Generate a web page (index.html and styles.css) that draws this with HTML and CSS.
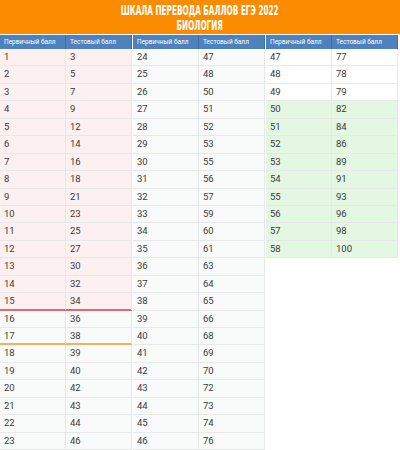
FILE: index.html
```html
<!DOCTYPE html>
<html lang="ru">
<head>
<meta charset="utf-8">
<link rel="stylesheet" href="styles.css">
</head>
<body>
<header class="banner">
  <div class="title"><span>ШКАЛА ПЕРЕВОДА БАЛЛОВ ЕГЭ 2022</span></div>
  <div class="title"><span>БИОЛОГИЯ</span></div>
</header>
<main class="tables">
  <section class="tbl">
    <div class="head"><div>Первичный балл</div><div>Тестовый балл</div></div>
    <div class="row pink"><div>1</div><div>3</div></div>
    <div class="row pink"><div>2</div><div>5</div></div>
    <div class="row pink"><div>3</div><div>7</div></div>
    <div class="row pink"><div>4</div><div>9</div></div>
    <div class="row pink"><div>5</div><div>12</div></div>
    <div class="row pink"><div>6</div><div>14</div></div>
    <div class="row pink"><div>7</div><div>16</div></div>
    <div class="row pink"><div>8</div><div>18</div></div>
    <div class="row pink"><div>9</div><div>21</div></div>
    <div class="row pink"><div>10</div><div>23</div></div>
    <div class="row pink"><div>11</div><div>25</div></div>
    <div class="row pink"><div>12</div><div>27</div></div>
    <div class="row pink"><div>13</div><div>30</div></div>
    <div class="row pink"><div>14</div><div>32</div></div>
    <div class="row pink red-line"><div>15</div><div>34</div></div>
    <div class="row"><div>16</div><div>36</div></div>
    <div class="row orange-line"><div>17</div><div>38</div></div>
    <div class="row"><div>18</div><div>39</div></div>
    <div class="row"><div>19</div><div>40</div></div>
    <div class="row"><div>20</div><div>42</div></div>
    <div class="row"><div>21</div><div>43</div></div>
    <div class="row"><div>22</div><div>44</div></div>
    <div class="row"><div>23</div><div>46</div></div>
  </section>
  <section class="tbl">
    <div class="head"><div>Первичный балл</div><div>Тестовый балл</div></div>
    <div class="row"><div>24</div><div>47</div></div>
    <div class="row"><div>25</div><div>48</div></div>
    <div class="row"><div>26</div><div>50</div></div>
    <div class="row"><div>27</div><div>51</div></div>
    <div class="row"><div>28</div><div>52</div></div>
    <div class="row"><div>29</div><div>53</div></div>
    <div class="row"><div>30</div><div>55</div></div>
    <div class="row"><div>31</div><div>56</div></div>
    <div class="row"><div>32</div><div>57</div></div>
    <div class="row"><div>33</div><div>59</div></div>
    <div class="row"><div>34</div><div>60</div></div>
    <div class="row"><div>35</div><div>61</div></div>
    <div class="row"><div>36</div><div>63</div></div>
    <div class="row"><div>37</div><div>64</div></div>
    <div class="row"><div>38</div><div>65</div></div>
    <div class="row"><div>39</div><div>66</div></div>
    <div class="row"><div>40</div><div>68</div></div>
    <div class="row"><div>41</div><div>69</div></div>
    <div class="row"><div>42</div><div>70</div></div>
    <div class="row"><div>43</div><div>72</div></div>
    <div class="row"><div>44</div><div>73</div></div>
    <div class="row"><div>45</div><div>74</div></div>
    <div class="row"><div>46</div><div>76</div></div>
  </section>
  <section class="tbl">
    <div class="head"><div>Первичный балл</div><div>Тестовый балл</div></div>
    <div class="row white"><div>47</div><div>77</div></div>
    <div class="row white"><div>48</div><div>78</div></div>
    <div class="row white"><div>49</div><div>79</div></div>
    <div class="row green"><div>50</div><div>82</div></div>
    <div class="row green"><div>51</div><div>84</div></div>
    <div class="row green"><div>52</div><div>86</div></div>
    <div class="row green"><div>53</div><div>89</div></div>
    <div class="row green"><div>54</div><div>91</div></div>
    <div class="row green"><div>55</div><div>93</div></div>
    <div class="row green"><div>56</div><div>96</div></div>
    <div class="row green"><div>57</div><div>98</div></div>
    <div class="row green"><div>58</div><div>100</div></div>
  </section>
</main>
</body>
</html>
```
FILE: styles.css
```css
html, body {
  margin: 0;
  padding: 0;
  background: #ffffff;
}
body {
  width: 400px;
  height: 450px;
  overflow: hidden;
  font-family: Roboto, "Noto Sans", sans-serif;
}
.banner {
  background: #fb8c00;
  height: 34px;
  box-sizing: border-box;
  padding-top: 3px;
  display: flex;
  flex-direction: column;
  align-items: center;
}
.title {
  height: 15px;
  display: flex;
  justify-content: center;
  color: #ffffff;
  font-family: "DejaVu Sans Condensed", "DejaVu Sans", sans-serif;
  font-weight: bold;
  font-size: 13.5px;
  line-height: 15px;
  white-space: nowrap;
}
.title span {
  display: inline-block;
  transform: scaleX(0.6);
}
.tables {
  display: grid;
  grid-template-columns: 132px 132px 132px;
  column-gap: 1px;
  width: 398px;
  padding-top: 1px;
  align-items: start;
}
.tbl {
  display: flex;
  flex-direction: column;
}
.head {
  display: grid;
  grid-template-columns: 66px 66px;
  height: 14px;
  background: #4f81bd;
  color: #ffffff;
  font-size: 6.5px;
  line-height: 14px;
}
.head div {
  padding-left: 4px;
  border-right: 1px solid #3f6fa8;
}
.row {
  display: grid;
  grid-template-columns: 66px 66px;
  height: 17.45px;
  box-sizing: border-box;
  background: #f9fafa;
  border-bottom: 1px solid #e7e9e9;
  color: #3a3a3a;
  font-size: 9.5px;
  line-height: 16.45px;
}
.row div {
  padding-left: 4px;
  border-right: 1px solid #e7e9e9;
}
.row.pink { background: #fdf0f0; }
.row.green { background: #e4f7e2; }
.row.white { background: #ffffff; }
.row.red-line { border-bottom: 2px solid #de6a6a; }
.row.orange-line { border-bottom: 2px solid #f2b25c; }
```
